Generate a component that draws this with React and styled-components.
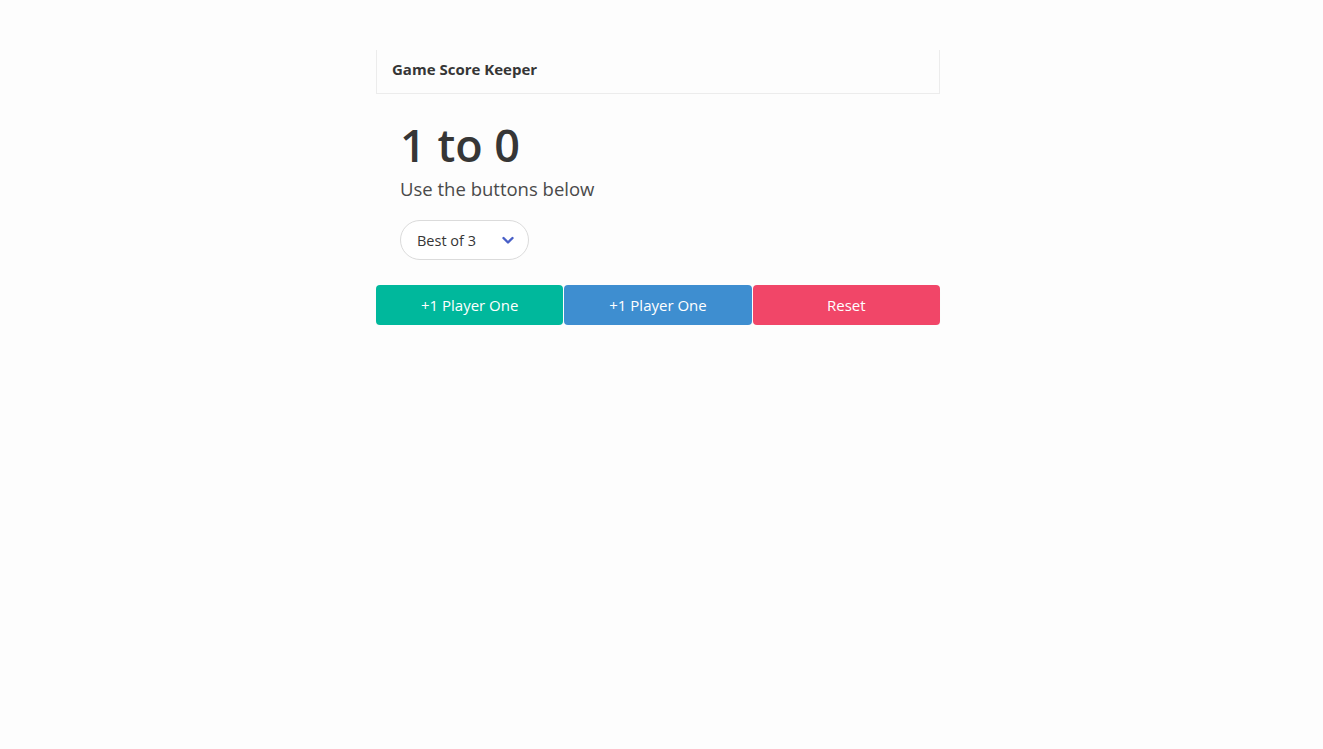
import React from "react";
import styled, { createGlobalStyle } from "styled-components";

const GlobalStyle = createGlobalStyle`
  html, body {
    margin: 0;
    padding: 0;
    background: #fdfdfd;
    font-family: "Open Sans", "Noto Sans", sans-serif;
    color: #363636;
  }
`;

const Page = styled.div`
  padding: 50px 0 0 376px;
`;

const Card = styled.div`
  width: 564px;
`;

const CardHeader = styled.header`
  display: flex;
  align-items: center;
  box-sizing: border-box;
  height: 44px;
  padding: 0 15px 5px;
  border-left: 1px solid #ececec;
  border-right: 1px solid #ececec;
  border-bottom: 1px solid #ececec;
`;

const HeaderTitle = styled.p`
  margin: 0;
  font-size: 15px;
  font-weight: 700;
  color: #363636;
`;

const CardContent = styled.div`
  padding: 24px 24px 25px;
`;

const Score = styled.h1`
  margin: 0;
  font-size: 45px;
  font-weight: 600;
  line-height: 1.2;
  color: #363636;
`;

const Subtitle = styled.p`
  margin: 5px 0 20px;
  font-size: 18.5px;
  line-height: 1.25;
  color: #4a4a4a;
`;

const SelectBox = styled.div`
  display: inline-flex;
  align-items: center;
  justify-content: space-between;
  box-sizing: border-box;
  width: 129px;
  height: 40px;
  padding: 0 14px 0 16px;
  border: 1px solid #dbdbdb;
  border-radius: 20px;
  background: #fff;
  font-size: 14.5px;
  color: #363636;
`;

const Footer = styled.footer`
  display: flex;
  box-shadow: 0 3px 2px -1px rgba(10, 10, 10, 0.08);
  border-radius: 4px;
`;

const Button = styled.button`
  flex: 1;
  height: 40px;
  border: none;
  border-radius: 4px;
  margin: 0;
  background: ${(p) => p.color};
  color: #fff;
  font-family: inherit;
  font-size: 15px;
  cursor: pointer;
  & + & {
    margin-left: 1px;
  }
`;

const Chevron = () => (
  <svg width="12" height="9" viewBox="0 0 12 9">
    <path
      d="M1.5 2 L6 6.5 L10.5 2"
      fill="none"
      stroke="#485fc7"
      strokeWidth="2.4"
      strokeLinecap="round"
      strokeLinejoin="round"
    />
  </svg>
);

export default function App() {
  return (
    <>
      <GlobalStyle />
      <Page>
        <Card>
          <CardHeader>
            <HeaderTitle>Game Score Keeper</HeaderTitle>
          </CardHeader>
          <CardContent>
            <Score>1 to 0</Score>
            <Subtitle>Use the buttons below</Subtitle>
            <SelectBox>
              <span>Best of 3</span>
              <Chevron />
            </SelectBox>
          </CardContent>
          <Footer>
            <Button color="#00b89c">+1 Player One</Button>
            <Button color="#3e8ed0">+1 Player One</Button>
            <Button color="#f14668">Reset</Button>
          </Footer>
        </Card>
      </Page>
    </>
  );
}
